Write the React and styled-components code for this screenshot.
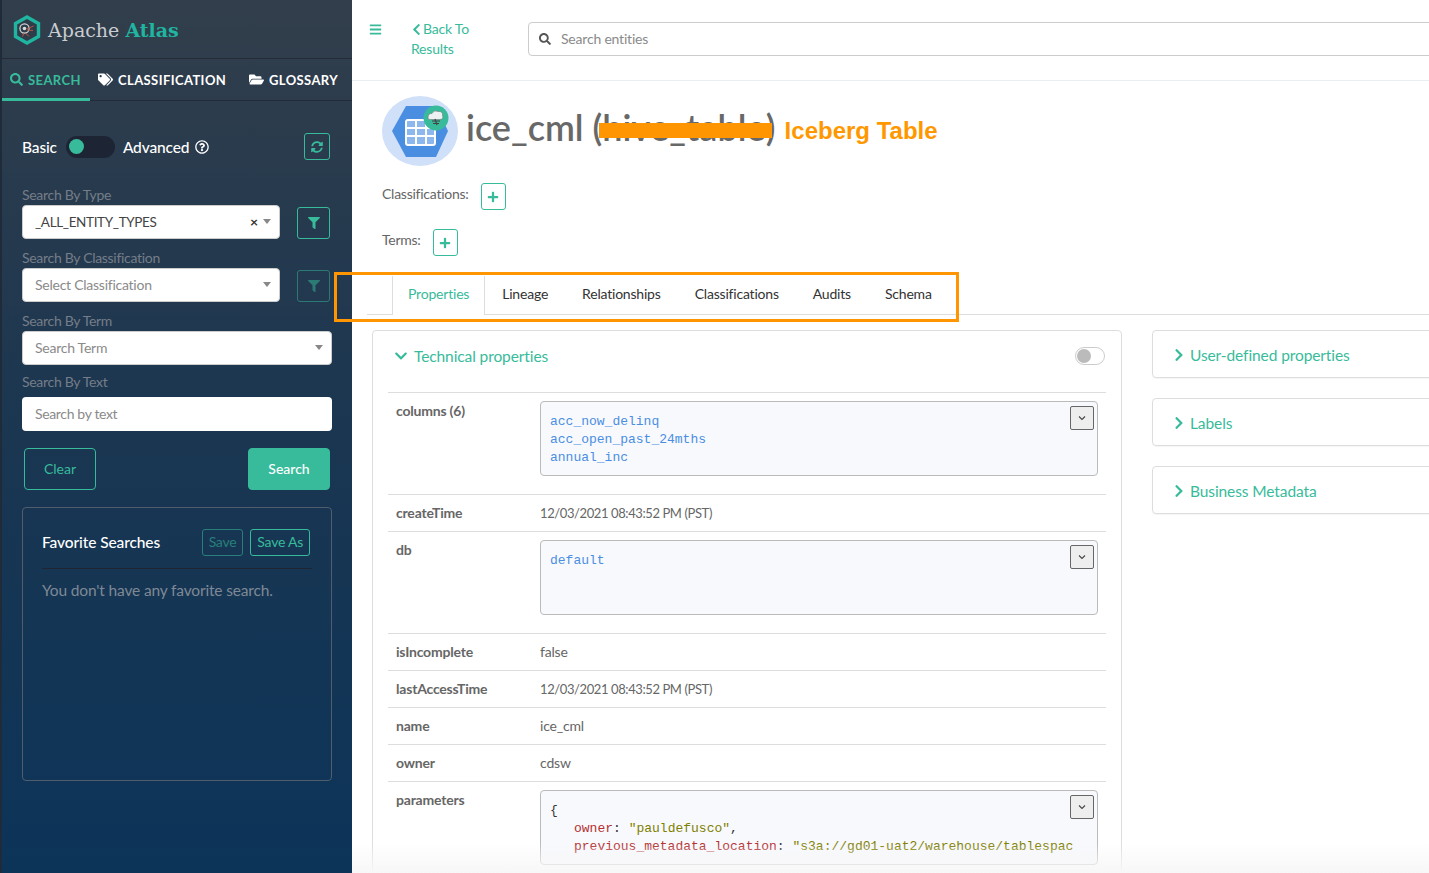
import styled, { createGlobalStyle } from "styled-components";
import {
  FaBars,
  FaChevronDown,
  FaChevronLeft,
  FaChevronRight,
  FaFilter,
  FaFolderOpen,
  FaPlus,
  FaRegQuestionCircle,
  FaSearch,
  FaSyncAlt,
  FaTags,
} from "react-icons/fa";

const GREEN = "#37bb9b";
const FONT = '"Lato", "Noto Sans", sans-serif';

const GlobalStyle = createGlobalStyle`
  html, body {
    margin: 0;
    height: 100%;
    overflow: hidden;
    background: #fff;
    font-family: ${FONT};
  }
  * { box-sizing: border-box; }
`;

const AtlasLogo = () => (
  <svg width="28" height="30" viewBox="0 0 28 30">
    <path d="M14 2 L25.5 8.5 V21.5 L14 28 L2.5 21.5 V8.5 Z" fill="#2f3d4a" stroke="#1fb5a0" strokeWidth="3.4" />
    <circle cx="11.5" cy="13.5" r="4.6" fill="none" stroke="#d5d9dc" strokeWidth="1.2" />
    <circle cx="11.5" cy="13.5" r="1.8" fill="#d5d9dc" />
    <path d="M14 14 L20.5 11 M14 15 L20 15.5 M12.5 18 L16 21.5 M11 18 L9.5 21.5" stroke="#c8553d" strokeWidth="0.9" />
  </svg>
);

const EntityIcon = () => (
  <svg width="76" height="70" viewBox="0 0 76 70">
    <ellipse cx="38" cy="35" rx="38" ry="35" fill="#cfe0f8" />
    <path d="M24 10 H54 L66 35 L54 61 H24 L10 35 Z" fill="#4a8ee2" />
    <rect x="24" y="24" width="29" height="25" rx="2" fill="#8db8ee" stroke="#fff" strokeWidth="2" />
    <path d="M24 32 H53 M24 40 H53 M34 24 V49 M44 24 V49" stroke="#fff" strokeWidth="2" />
    <circle cx="54" cy="22" r="12.5" fill="#37bb9b" />
    <path d="M46 22 Q46 17 50 17.5 Q52 13.5 56 15.5 Q61 15 60.5 19.5 Q62 23 58 23.5 H48 Q46 23.5 46 22 Z" fill="#eef1f1" stroke="#777" strokeWidth="0.6" />
    <path d="M53 23 L55 29 M50 25 L58 25 M51 27.5 L57 27.5" stroke="#444" strokeWidth="1.2" />
  </svg>
);

const columns = ["acc_now_delinq", "acc_open_past_24mths", "annual_inc"];

const Code = ({ height = 75, children }) => (
  <CodeBox $height={height}>
    {children}
    <ExpandButton>
      <svg width="10" height="10" viewBox="0 0 10 10">
        <path d="M2 3.5 L5 6.5 L8 3.5" fill="none" stroke="#444" strokeWidth="1.1" />
      </svg>
    </ExpandButton>
  </CodeBox>
);

const App = () => {
  return (
    <Page>
      <GlobalStyle />
      <Sidebar>
        <Brand>
          <AtlasLogo />
          <BrandName>
            Apache <span>Atlas</span>
          </BrandName>
        </Brand>
        <NavTabs>
          <NavTab $active $width={88}>
            <FaSearch size={13} /> SEARCH
          </NavTab>
          <NavTab $width={151}>
            <FaTags size={15} /> CLASSIFICATION
          </NavTab>
          <NavTab $width={111}>
            <FaFolderOpen size={15} /> GLOSSARY
          </NavTab>
        </NavTabs>
        <SearchForm>
          <ModeRow>
            <ModeLabel $gap={9}>Basic</ModeLabel>
            <Switch>
              <SwitchKnob />
            </Switch>
            <ModeLabel $gap={6}>Advanced</ModeLabel>
            <FaRegQuestionCircle size={14} color="#fff" />
            <IconButton $height={27} $small>
              <FaSyncAlt size={12} />
            </IconButton>
          </ModeRow>

          <FieldLabel $top={26}>Search By Type</FieldLabel>
          <FieldRow>
            <SelectBox $width={258}>
              <SelectText>_ALL_ENTITY_TYPES</SelectText>
              <ClearMark>×</ClearMark>
              <Caret />
            </SelectBox>
            <IconButton $height={32} $top={2}>
              <FaFilter size={12} />
            </IconButton>
          </FieldRow>

          <FieldLabel $top={10}>Search By Classification</FieldLabel>
          <FieldRow>
            <SelectBox $width={258}>
              <SelectText $placeholder>Select Classification</SelectText>
              <Caret />
            </SelectBox>
            <IconButton $height={32} $top={2} $dim>
              <FaFilter size={12} />
            </IconButton>
          </FieldRow>

          <FieldLabel $top={10}>Search By Term</FieldLabel>
          <SelectBox $width={310}>
            <SelectText $placeholder>Search Term</SelectText>
            <Caret />
          </SelectBox>

          <FieldLabel $top={8} $bottom={6}>Search By Text</FieldLabel>
          <TextInput placeholder="Search by text" />

          <ActionRow>
            <ClearButton>Clear</ClearButton>
            <SearchButton>Search</SearchButton>
          </ActionRow>

          <FavoriteCard>
            <FavoriteHead>
              <FavoriteTitle>Favorite Searches</FavoriteTitle>
              <SmallButton $dim>Save</SmallButton>
              <SmallButton>Save As</SmallButton>
            </FavoriteHead>
            <FavoriteEmpty>You don't have any favorite search.</FavoriteEmpty>
          </FavoriteCard>
        </SearchForm>
      </Sidebar>

      <Main>
        <TopBar>
          <FaBars size={13} color={GREEN} />
          <BackLink>
            <FaChevronLeft size={13} />
            Back To
            <br />
            Results
          </BackLink>
          <EntitySearch>
            <FaSearch size={12} color="#555" />
            <EntityInput placeholder="Search entities" />
          </EntitySearch>
        </TopBar>

        <Content>
          <TitleRow>
            <EntityIcon />
            <EntityName>
              ice_cml (<HiddenType>hive_table</HiddenType>)
              <Redaction />
            </EntityName>
            <IcebergLabel>Iceberg Table</IcebergLabel>
          </TitleRow>

          <TagRow $top={17}>
            Classifications:
            <AddButton>
              <FaPlus size={12} />
            </AddButton>
          </TagRow>
          <TagRow $top={19}>
            Terms:
            <AddButton>
              <FaPlus size={12} />
            </AddButton>
          </TagRow>

          <DetailTabs>
            <DetailTab $active>Properties</DetailTab>
            <DetailTab>Lineage</DetailTab>
            <DetailTab>Relationships</DetailTab>
            <DetailTab>Classifications</DetailTab>
            <DetailTab>Audits</DetailTab>
            <DetailTab>Schema</DetailTab>
          </DetailTabs>

          <Columns>
            <TechPanel>
              <TechHead>
                <PanelTitle $gap={6}>
                  <FaChevronDown size={14} />
                  Technical properties
                </PanelTitle>
                <MiniSwitch />
              </TechHead>

              <PropRow $tall>
                <PropKey>columns (6)</PropKey>
                <Code>
                  {columns.map((c) => (
                    <div key={c}>{c}</div>
                  ))}
                </Code>
              </PropRow>
              <PropRow>
                <PropKey>createTime</PropKey>
                <PropValue $date>12/03/2021 08:43:52 PM (PST)</PropValue>
              </PropRow>
              <PropRow $tall>
                <PropKey>db</PropKey>
                <Code>default</Code>
              </PropRow>
              <PropRow>
                <PropKey>isIncomplete</PropKey>
                <PropValue>false</PropValue>
              </PropRow>
              <PropRow>
                <PropKey>lastAccessTime</PropKey>
                <PropValue $date>12/03/2021 08:43:52 PM (PST)</PropValue>
              </PropRow>
              <PropRow>
                <PropKey>name</PropKey>
                <PropValue>ice_cml</PropValue>
              </PropRow>
              <PropRow>
                <PropKey>owner</PropKey>
                <PropValue>cdsw</PropValue>
              </PropRow>
              <PropRow $tall>
                <PropKey>parameters</PropKey>
                <Code>
                  <Brace>{"{"}</Brace>
                  <JsonLine>
                    <JsonKey>owner</JsonKey>: <JsonString>"pauldefusco"</JsonString>,
                  </JsonLine>
                  <JsonLine>
                    <JsonKey>previous_metadata_location</JsonKey>:{" "}
                    <JsonString>"s3a://gd01-uat2/warehouse/tablespac</JsonString>
                  </JsonLine>
                </Code>
              </PropRow>
            </TechPanel>

            <SidePanels>
              {["User-defined properties", "Labels", "Business Metadata"].map((title) => (
                <SidePanel key={title}>
                  <PanelTitle $gap={4}>
                    <FaChevronRight size={14} />
                    {title}
                  </PanelTitle>
                </SidePanel>
              ))}
            </SidePanels>
          </Columns>
        </Content>
        <BottomFade />
        <Highlight />
      </Main>
    </Page>
  );
};

const Page = styled.div`
  display: flex;
  width: 1429px;
  height: 873px;
  overflow: hidden;
`;

const Sidebar = styled.aside`
  flex: 0 0 352px;
  height: 873px;
  border-left: 2px solid #1f2b38;
  background: linear-gradient(180deg, #323e4b 0%, #1a3651 50%, #0c3459 100%);
`;

const Brand = styled.div`
  display: flex;
  align-items: center;
  gap: 7px;
  height: 59px;
  padding: 2px 0 0 11px;
  border-bottom: 1px solid #222b36;
`;

const BrandName = styled.div`
  font-family: "DejaVu Serif", serif;
  font-size: 19px;
  color: #c9ccd0;
  white-space: nowrap;
  span {
    color: #1fb5a0;
    font-weight: 700;
  }
`;

const NavTabs = styled.nav`
  display: flex;
  height: 42px;
  border-bottom: 1px solid #222b36;
`;

const NavTab = styled.div`
  display: flex;
  flex: none;
  align-items: center;
  gap: 5px;
  width: ${(p) => p.$width}px;
  height: 42px;
  padding: 2px 0 0 8px;
  font-size: 13px;
  font-weight: 700;
  letter-spacing: 0.4px;
  color: ${(p) => (p.$active ? GREEN : "#fff")};
  border-bottom: 3px solid ${(p) => (p.$active ? GREEN : "transparent")};
`;

const SearchForm = styled.div`
  padding: 32px 20px 0;
`;

const ModeRow = styled.div`
  display: flex;
  align-items: center;
  height: 27px;
  width: 308px;
`;

const ModeLabel = styled.span`
  font-size: 15.5px;
  font-weight: 500;
  letter-spacing: -0.15px;
  color: #fff;
  margin-right: ${(p) => p.$gap}px;
`;

const Switch = styled.div`
  display: flex;
  align-items: center;
  width: 49px;
  height: 22px;
  margin-right: 8px;
  padding-left: 3px;
  border-radius: 11px;
  background: #1d2433;
`;

const SwitchKnob = styled.div`
  width: 15px;
  height: 15px;
  border-radius: 50%;
  background: ${GREEN};
`;

const IconButton = styled.div`
  display: flex;
  align-items: center;
  justify-content: center;
  width: ${(p) => (p.$small ? 26 : 33)}px;
  height: ${(p) => p.$height}px;
  margin-left: auto;
  margin-top: ${(p) => p.$top || 0}px;
  border: 1px solid ${GREEN};
  border-radius: 3px;
  color: ${GREEN};
  opacity: ${(p) => (p.$dim ? 0.5 : 1)};
`;

const FieldLabel = styled.div`
  margin-top: ${(p) => p.$top}px;
  margin-bottom: ${(p) => p.$bottom || 1}px;
  height: 18px;
  line-height: 18px;
  font-size: 14px;
  letter-spacing: -0.3px;
  color: #757d88;
`;

const FieldRow = styled.div`
  display: flex;
  width: 308px;
`;

const SelectBox = styled.div`
  display: flex;
  align-items: center;
  width: ${(p) => p.$width}px;
  height: 34px;
  padding: 0 8px 1px 12px;
  background: #fff;
  border: 1px solid #ccc;
  border-radius: 4px;
`;

const SelectText = styled.span`
  flex: 1;
  font-size: ${(p) => (p.$placeholder ? 14 : 13.5)}px;
  letter-spacing: ${(p) => (p.$placeholder ? -0.25 : -0.35)}px;
  color: ${(p) => (p.$placeholder ? "#8a8a8a" : "#444")};
`;

const ClearMark = styled.span`
  font-size: 14px;
  font-weight: 700;
  color: #333;
  margin-right: 5px;
`;

const Caret = styled.span`
  width: 0;
  height: 0;
  border-left: 4px solid transparent;
  border-right: 4px solid transparent;
  border-top: 5px solid #888;
`;

const TextInput = styled.input`
  display: block;
  width: 310px;
  height: 34px;
  padding: 0 13px 2px;
  border: none;
  border-radius: 4px;
  background: #fff;
  font-family: ${FONT};
  font-size: 14px;
  letter-spacing: -0.35px;
  &::placeholder {
    color: #8a8a8a;
    opacity: 1;
  }
`;

const ActionRow = styled.div`
  display: flex;
  justify-content: space-between;
  width: 306px;
  margin: 17px 0 17px 2px;
`;

const ClearButton = styled.button`
  width: 72px;
  height: 42px;
  padding: 0 0 2px;
  border: 1px solid ${GREEN};
  border-radius: 4px;
  background: transparent;
  color: ${GREEN};
  font-family: ${FONT};
  font-size: 14px;
`;

const SearchButton = styled(ClearButton)`
  width: 82px;
  background: ${GREEN};
  color: #fff;
  font-weight: 500;
`;

const FavoriteCard = styled.section`
  width: 310px;
  height: 274px;
  padding: 21px 19px;
  border: 1px solid #505d6c;
  border-radius: 4px;
`;

const FavoriteHead = styled.div`
  display: flex;
  align-items: center;
  gap: 7px;
  height: 40px;
  padding: 0 2px 12px 0;
  border-bottom: 1px solid #1f2533;
  width: 270px;
`;

const FavoriteTitle = styled.h4`
  flex: 1;
  margin: 0 0 2px;
  font-size: 15.5px;
  font-weight: 500;
  letter-spacing: -0.1px;
  color: #fff;
`;

const SmallButton = styled.div`
  padding: 0 6px;
  height: 27px;
  line-height: 23px;
  font-size: 14px;
  letter-spacing: -0.25px;
  color: ${GREEN};
  border: 1px solid ${GREEN};
  border-radius: 3px;
  opacity: ${(p) => (p.$dim ? 0.55 : 1)};
`;

const FavoriteEmpty = styled.p`
  margin: 11px 0 0;
  font-size: 15.5px;
  line-height: 20px;
  letter-spacing: -0.15px;
  color: #7f8994;
`;

const Main = styled.main`
  position: relative;
  flex: 0 0 1077px;
  height: 873px;
`;

const TopBar = styled.header`
  display: flex;
  height: 81px;
  padding: 23px 0 0 17px;
  border-bottom: 1px solid #eaedf2;
  > svg {
    flex: none;
  }
`;

const BackLink = styled.div`
  flex: 0 0 117px;
  margin: -4px 0 0 29px;
  font-size: 14px;
  line-height: 20px;
  letter-spacing: -0.2px;
  color: ${GREEN};
  svg {
    margin: 0 0 0 -1px;
    vertical-align: -2px;
  }
`;

const EntitySearch = styled.div`
  display: flex;
  flex: 0 0 940px;
  align-items: center;
  gap: 10px;
  height: 34px;
  margin-top: -1px;
  padding: 0 0 1px 10px;
  border: 1px solid #ccc;
  border-radius: 4px;
`;

const EntityInput = styled.input`
  flex: 1;
  padding: 0 0 1px;
  border: none;
  outline: none;
  font-family: ${FONT};
  font-size: 14px;
  letter-spacing: -0.2px;
  &::placeholder {
    color: #8a8a8a;
    opacity: 1;
  }
`;

const Content = styled.div`
  padding: 15px 0 0 30px;
`;

const TitleRow = styled.div`
  display: flex;
  align-items: center;
  height: 70px;
  white-space: nowrap;
`;

const EntityName = styled.h1`
  position: relative;
  margin: 0 0 8px 8px;
  font-size: 36px;
  font-weight: 600;
  color: #686868;
`;

const HiddenType = styled.span`
  letter-spacing: 0.1px;
  color: #686868;
`;

const Redaction = styled.div`
  position: absolute;
  left: 133px;
  top: 18px;
  width: 173px;
  height: 15px;
  background: #ff9500;
`;

const IcebergLabel = styled.span`
  margin: 0 0 0 9px;
  font-family: "Liberation Sans", Arial, sans-serif;
  font-size: 24px;
  font-weight: 700;
  color: #ff9800;
`;

const TagRow = styled.div`
  display: flex;
  align-items: flex-start;
  gap: 12px;
  margin-top: ${(p) => p.$top}px;
  font-size: 14px;
  line-height: 22px;
  letter-spacing: -0.25px;
  color: #666;
`;

const AddButton = styled.div`
  display: flex;
  align-items: center;
  justify-content: center;
  width: 25px;
  height: 27px;
  border: 1px solid ${GREEN};
  border-radius: 3px;
  color: ${GREEN};
`;

const DetailTabs = styled.div`
  display: flex;
  height: 39px;
  margin: 20px 0 15px -15px;
  padding-left: 25px;
  border-bottom: 1px solid #ddd;
`;

const DetailTab = styled.div`
  flex: none;
  height: 39px;
  padding: 0 ${(p) => (p.$active ? 15 : 17)}px;
  line-height: 36px;
  font-size: 14px;
  letter-spacing: -0.2px;
  color: ${(p) => (p.$active ? GREEN : "#333")};
  background: ${(p) => (p.$active ? "#fff" : "transparent")};
  border: solid #ddd;
  border-width: ${(p) => (p.$active ? "0 1px" : 0)};
`;

const Columns = styled.div`
  display: flex;
  align-items: flex-start;
  gap: 30px;
  margin-left: -10px;
`;

const TechPanel = styled.section`
  flex: 0 0 750px;
  padding: 0 15px;
  border: 1px solid #ddd;
  border-radius: 4px;
`;

const TechHead = styled.div`
  display: flex;
  align-items: center;
  justify-content: space-between;
  height: 61px;
  padding: 0 1px 12px 6px;
`;

const PanelTitle = styled.div`
  display: flex;
  align-items: center;
  gap: ${(p) => p.$gap}px;
  font-size: 15.5px;
  letter-spacing: -0.1px;
  color: ${GREEN};
`;

const MiniSwitch = styled.div`
  width: 30px;
  height: 18px;
  border: 1px solid #ccc;
  border-radius: 9px;
  &::before {
    content: "";
    display: block;
    width: 14px;
    height: 14px;
    margin: 1px;
    border-radius: 50%;
    background: #bbb;
  }
`;

const PropRow = styled.div`
  display: flex;
  min-height: ${(p) => (p.$tall ? 0 : 37)}px;
  padding: ${(p) => (p.$tall ? "8px 8px 18px 8px" : "8px")};
  border-top: 1px solid #ddd;
`;

const PropKey = styled.div`
  flex: 0 0 144px;
  font-size: 14px;
  line-height: 20px;
  font-weight: 700;
  letter-spacing: -0.2px;
  color: #666;
`;

const PropValue = styled.div`
  font-size: ${(p) => (p.$date ? 13 : 14)}px;
  line-height: 20px;
  letter-spacing: ${(p) => (p.$date ? -0.4 : -0.2)}px;
  color: #666;
`;

const CodeBox = styled.div`
  position: relative;
  flex: 0 0 558px;
  height: ${(p) => p.$height}px;
  padding: 11px 9px;
  overflow: hidden;
  white-space: pre;
  background: #f8f9fd;
  border: 1px solid #bbb;
  border-radius: 4px;
  font-family: "Liberation Mono", monospace;
  font-size: 13px;
  line-height: 18px;
  color: #4a8ee2;
`;

const ExpandButton = styled.div`
  position: absolute;
  top: 4px;
  right: 3px;
  display: flex;
  align-items: center;
  justify-content: center;
  width: 24px;
  height: 24px;
  background: #eee;
  border: 1px solid #666;
  border-radius: 2px;
`;

const Brace = styled.div`
  color: #333;
`;

const JsonLine = styled.div`
  padding-left: 24px;
  color: #333;
`;

const JsonKey = styled.span`
  color: #b33030;
`;

const JsonString = styled.span`
  color: #808000;
`;

const SidePanels = styled.div`
  display: flex;
  flex: 0 0 400px;
  flex-direction: column;
  gap: 20px;
`;

const SidePanel = styled.div`
  display: flex;
  align-items: center;
  height: 48px;
  padding: 2px 0 0 19px;
  border: 1px solid #ddd;
  border-radius: 4px;
  box-shadow: 0 1px 1px rgba(0, 0, 0, 0.04);
`;

const BottomFade = styled.div`
  position: absolute;
  left: 0;
  right: 0;
  bottom: 0;
  height: 30px;
  background: linear-gradient(180deg, rgba(247, 247, 247, 0), rgba(247, 247, 247, 1));
  pointer-events: none;
`;

const Highlight = styled.div`
  position: absolute;
  left: -18px;
  top: 272px;
  width: 625px;
  height: 50px;
  border: 3px solid #ff9500;
  pointer-events: none;
`;

export default App;
